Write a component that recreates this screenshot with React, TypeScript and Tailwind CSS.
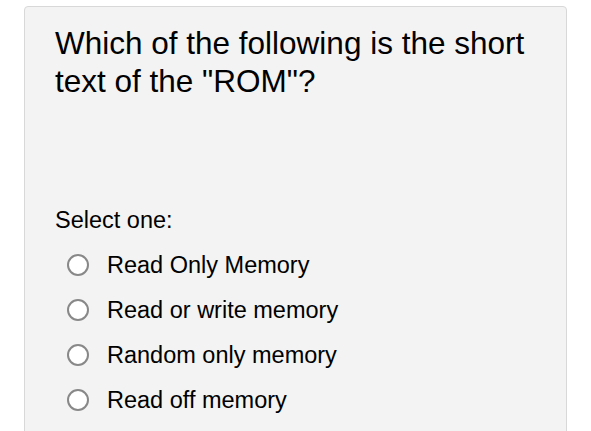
import React from "react";

const options = ["Read Only Memory", "Read or write memory", "Random only memory", "Read off memory"];

export default function App() {
  return (
    <div className="w-[591px] h-[431px] overflow-hidden bg-white" style={{ fontFamily: '"Liberation Sans", Arial, sans-serif' }}>
      <div className="ml-[24px] mt-[6px] w-[543px] h-[460px] rounded-[4px] border border-[#d8d8d8] bg-[#f3f3f3] pl-[30px] pt-[17px]">
        <h1 className="text-[31.5px] leading-[38px] text-black font-normal">
          Which of the following is the short<br />text of the "ROM"?
        </h1>
        <div className="mt-[106px] text-[23.5px] leading-[28px] text-black">Select one:</div>
        <div className="mt-[8px] flex flex-col">
          {options.map((o) => (
            <label key={o} className="flex h-[45px] items-center">
              <span className="ml-[12px] h-[22px] w-[22px] rounded-full border-2 border-[#888888] bg-white" />
              <span className="ml-[18px] text-[23.5px] leading-[28px] text-black">{o}</span>
            </label>
          ))}
        </div>
      </div>
    </div>
  );
}
